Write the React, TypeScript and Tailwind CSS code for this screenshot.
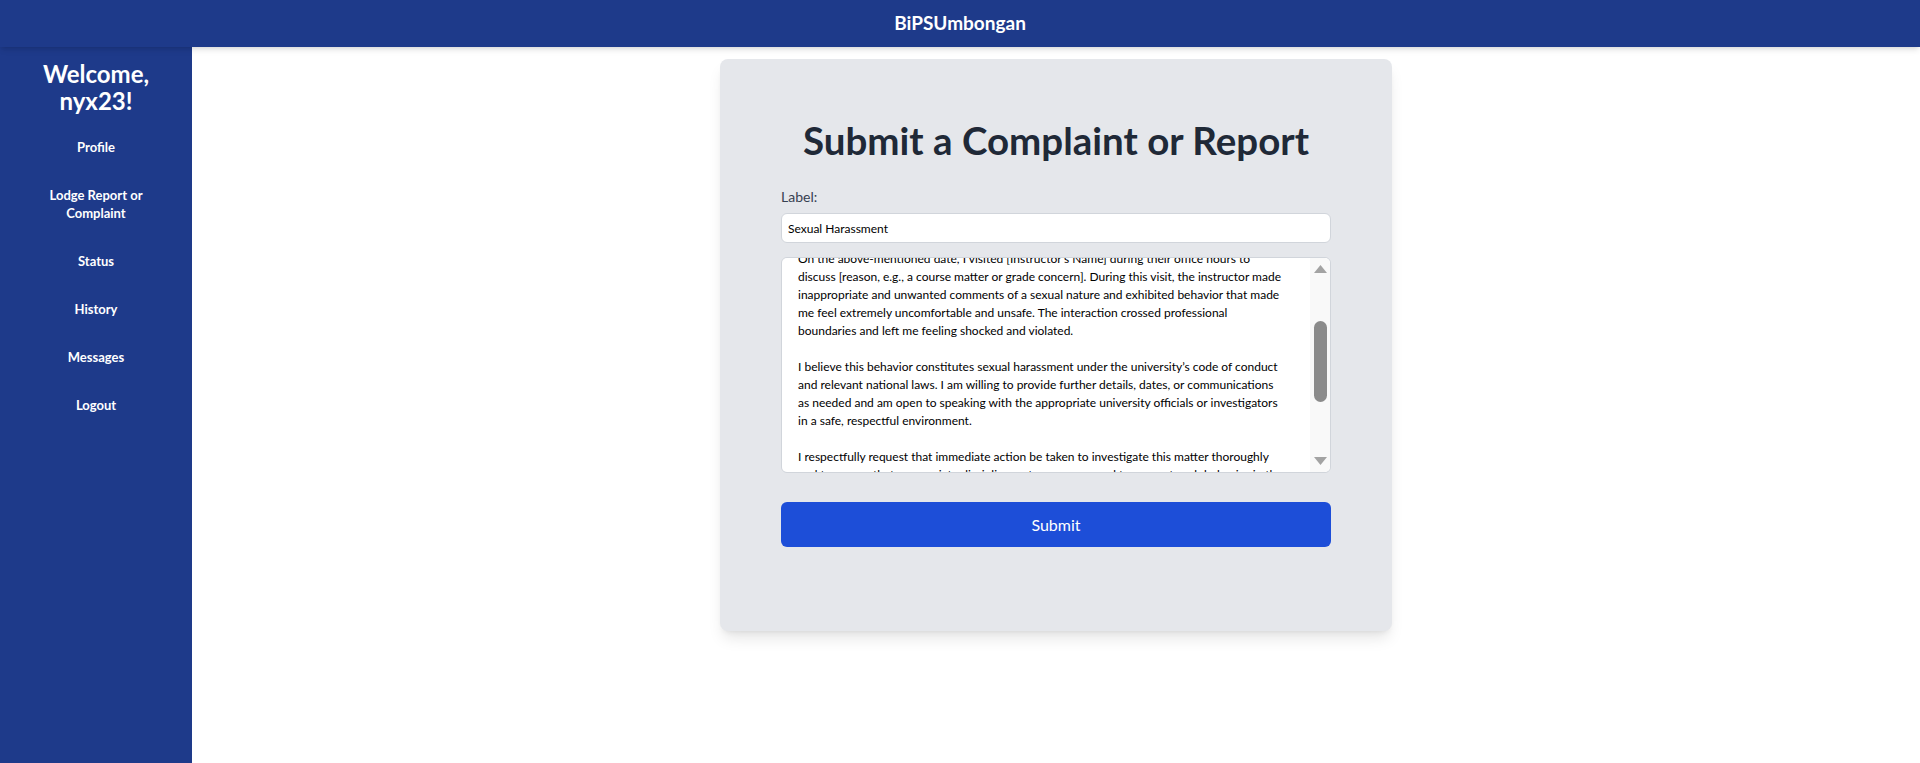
import { useEffect, useRef } from 'react';

const navItems = ['Profile', 'Lodge Report or Complaint', 'Status', 'History', 'Messages', 'Logout'];

// hard-wrapped so the lines break where the original form shows them
const complaintText = [
  'To Whom It May Concern,',
  '',
  "I am writing to formally report an incident of sexual harassment by [Instructor's Name] that",
  'occurred on [Date] at [Location] within the university campus.',
  '',
  "On the above-mentioned date, I visited [Instructor's Name] during their office hours to",
  'discuss [reason, e.g., a course matter or grade concern]. During this visit, the instructor made',
  'inappropriate and unwanted comments of a sexual nature and exhibited behavior that made',
  'me feel extremely uncomfortable and unsafe. The interaction crossed professional',
  'boundaries and left me feeling shocked and violated.',
  '',
  "I believe this behavior constitutes sexual harassment under the university\u2019s code of conduct",
  'and relevant national laws. I am willing to provide further details, dates, or communications',
  'as needed and am open to speaking with the appropriate university officials or investigators',
  'in a safe, respectful environment.',
  '',
  'I respectfully request that immediate action be taken to investigate this matter thoroughly',
  'and to ensure that appropriate disciplinary steps are pursued to prevent such behavior in the',
  'future. I also ask that measures be taken to protect me from any form of retaliation.',
  '',
  'Thank you for your attention to this serious matter.',
  '',
  'Sincerely,',
  'nyx23',
].join('\n');

const App = () => {
  const textRef = useRef<HTMLTextAreaElement>(null);

  useEffect(() => {
    if (textRef.current) textRef.current.scrollTop = 114;
  }, []);

  return (
    <div className="min-h-screen flex flex-col bg-white font-['Lato',sans-serif]">
      {/* Top bar */}
      <header className="relative z-10 h-[47px] bg-[#1e3a8a] shadow-md flex items-center justify-center">
        <h1 className="text-white font-bold text-[19px]">BiPSUmbongan</h1>
      </header>

      <div className="flex-1 flex">
        {/* Sidebar */}
        <aside className="w-48 bg-[#1e3a8a] px-8 pt-[13px] text-white text-center">
          <h2 className="text-[24px] leading-[27px] font-bold">Welcome, nyx23!</h2>
          <nav className="mt-[24px] flex flex-col gap-[30px]">
            {navItems.map((item) => (
              <a key={item} href="#" className="block text-[13px] leading-[18px] font-bold">
                {item}
              </a>
            ))}
          </nav>
        </aside>

        {/* Main */}
        <main className="flex-1 pt-3">
          <div className="mx-auto w-full max-w-2xl bg-[#e5e7eb] rounded-lg shadow-lg px-[61px] pt-[61px] pb-[84px]">
            <h2 className="text-center text-[38.5px] leading-[40px] font-bold text-[#1f2937] mb-[27px]">
              Submit a Complaint or Report
            </h2>
            <form onSubmit={(e) => e.preventDefault()}>
              <label className="block text-[14px] leading-[20px] text-[#374151] mb-[6px]">Label:</label>
              <input
                type="text"
                defaultValue="Sexual Harassment"
                className="w-full h-[30px] px-[6px] text-[12px] text-black bg-white border border-[#d1d5db] rounded-md outline-none"
              />
              <div className="relative mt-[14px]">
                <textarea
                  ref={textRef}
                  wrap="off"
                  defaultValue={complaintText}
                  className="block w-full h-[216px] pl-4 pr-[22px] py-4 text-[12px] leading-[18px] text-black bg-white border border-[#d1d5db] rounded-md resize-none outline-none overflow-scroll [scrollbar-width:none]"
                />
                {/* scrollbar */}
                <div className="absolute right-px top-px bottom-px w-[20px] bg-[#f9f9f9] rounded-r-md flex flex-col items-center pt-[7px] pb-[7px]">
                  <svg width="13" height="8" viewBox="0 0 13 8">
                    <polygon points="6.5,0 13,8 0,8" fill="#a3a3a3" />
                  </svg>
                  <div className="mt-[48px] w-[13px] h-[81px] rounded-full bg-[#8b8b8b]" />
                  <div className="flex-1" />
                  <svg width="13" height="8" viewBox="0 0 13 8">
                    <polygon points="0,0 13,0 6.5,8" fill="#a3a3a3" />
                  </svg>
                </div>
              </div>
              <button
                type="submit"
                className="mt-[29px] w-full h-[45px] bg-[#1d4ed8] text-white text-[16px] rounded-md"
              >
                Submit
              </button>
            </form>
          </div>
        </main>
      </div>
    </div>
  );
};

export default App;
